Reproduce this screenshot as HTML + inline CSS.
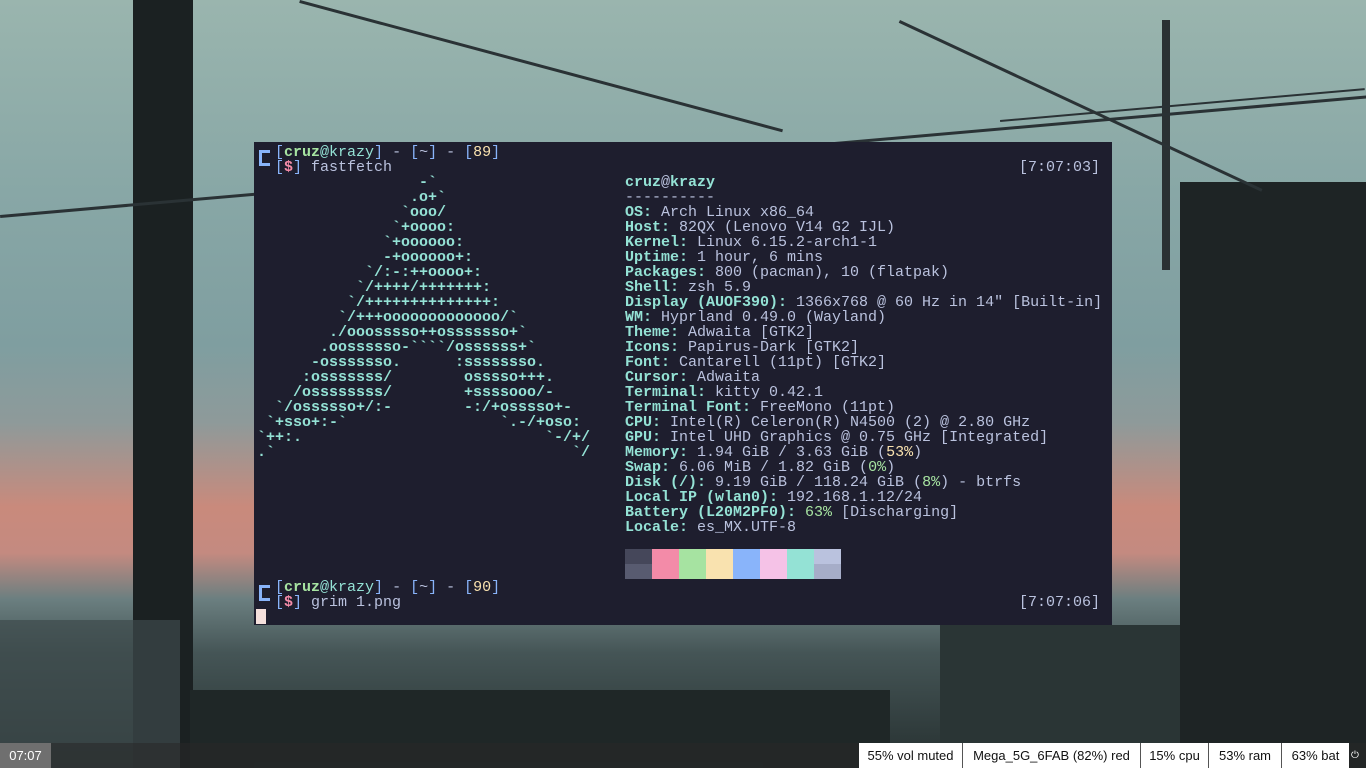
<!DOCTYPE html>
<html><head><meta charset="utf-8"><style>
*{margin:0;padding:0;box-sizing:border-box}
body{width:1366px;height:768px;overflow:hidden;position:relative;background:#86a3a3;font-family:"Liberation Mono",monospace}
.bg{position:absolute;inset:0;background:linear-gradient(180deg,#9ab5ae 0%,#88a7a6 25%,#7f9ea0 45%,#8e9a9a 55%,#c98a7c 66%,#c48a80 72%,#6b7f80 78%,#455556 85%,#263030 100%)}
.d{position:absolute;background:#1d2324}
.w{position:absolute;height:3px;background:#2a3235;transform-origin:0 0}
#term{position:absolute;left:254px;top:142px;width:858px;height:483px;background:#1e1e2e;color:#bac2de;font-size:15px;line-height:15px}
.l{position:absolute;white-space:pre;left:0}
.t{color:#94e2d5;font-weight:bold}
.g{color:#a6e3a1;font-weight:bold}
.gn{color:#a6e3a1}
.b{color:#89b4fa}
.y{color:#f9e2af}
.p{color:#f38ba8;font-weight:bold}
.lg{color:#94e2d5;font-weight:bold}
.br{position:absolute;left:5px;width:11px;height:16px;border:3px solid #89b4fa;border-right:none}
#bar{position:absolute;left:0;top:743px;width:1366px;height:25px;background:rgba(40,40,40,.55);font-family:"Liberation Sans",sans-serif;font-size:13px}
#clk{position:absolute;left:0;top:0;width:51px;height:25px;background:#6f6f6f;color:#fff;line-height:25px;text-align:center}
#mods{position:absolute;left:859px;top:0;height:25px;width:490px;display:flex;background:#fff;white-space:nowrap}
#mods div{line-height:25px;color:#111;border-right:1px solid #555;white-space:nowrap;text-align:center;overflow:hidden}
</style></head><body>
<div class="bg"></div>
<div class="d" style="left:133px;top:0;width:60px;height:768px;background:#1b2122"></div>
<div class="d" style="left:0;top:620px;width:180px;height:148px;background:#3d4a4b;opacity:.7"></div>
<div class="d" style="left:190px;top:690px;width:700px;height:78px;background:#1f2727"></div>
<div class="d" style="left:1180px;top:182px;width:186px;height:586px;background:#1e2425"></div>
<div class="d" style="left:1162px;top:20px;width:8px;height:250px;background:#2a3133"></div>
<div class="d" style="left:940px;top:625px;width:240px;height:143px;background:#2a3535"></div>
<div class="w" style="left:0;top:215px;width:1400px;transform:rotate(-5deg)"></div>
<div class="w" style="left:900px;top:20px;width:400px;transform:rotate(25deg)"></div>
<div class="w" style="left:300px;top:0;width:500px;transform:rotate(15deg)"></div>
<div class="w" style="left:1000px;top:120px;width:366px;transform:rotate(-5deg);height:2px"></div>
<div id="term">
<div class="br" style="top:8px"></div>
<div class="l" style="top:3px;left:21px"><span class="b">[</span><span class="g">cruz</span><span class="t" style="font-weight:normal">@krazy</span><span class="b">]</span> - <span class="b">[</span>~<span class="b">]</span> - <span class="b">[</span><span class="y">89</span><span class="b">]</span></div>
<div class="l" style="top:18px;left:21px"><span class="b">[</span><span class="p">$</span><span class="b">]</span> fastfetch</div>
<div class="l" style="top:18px;left:765px">[7:07:03]</div>
<div class="l lg" style="top:33px;left:3px">                  -&#96;
                 .o+&#96;
                &#96;ooo/
               &#96;+oooo:
              &#96;+oooooo:
              -+oooooo+:
            &#96;/:-:++oooo+:
           &#96;/++++/+++++++:
          &#96;/++++++++++++++:
         &#96;/+++ooooooooooooo/&#96;
        ./ooosssso++osssssso+&#96;
       .oossssso-&#96;&#96;&#96;&#96;/ossssss+&#96;
      -osssssso.      :ssssssso.
     :osssssss/        osssso+++.
    /ossssssss/        +ssssooo/-
  &#96;/ossssso+/:-        -:/+osssso+-
 &#96;+sso+:-&#96;                 &#96;.-/+oso:
&#96;++:.                           &#96;-/+/
.&#96;                                 &#96;/</div>
<div class="l" style="top:33px;left:371px"><span class="t">cruz</span>@<span class="t">krazy</span>
----------
<span class="t">OS:</span> Arch Linux x86_64
<span class="t">Host:</span> 82QX (Lenovo V14 G2 IJL)
<span class="t">Kernel:</span> Linux 6.15.2-arch1-1
<span class="t">Uptime:</span> 1 hour, 6 mins
<span class="t">Packages:</span> 800 (pacman), 10 (flatpak)
<span class="t">Shell:</span> zsh 5.9
<span class="t">Display (AUOF390):</span> 1366x768 @ 60 Hz in 14" [Built-in]
<span class="t">WM:</span> Hyprland 0.49.0 (Wayland)
<span class="t">Theme:</span> Adwaita [GTK2]
<span class="t">Icons:</span> Papirus-Dark [GTK2]
<span class="t">Font:</span> Cantarell (11pt) [GTK2]
<span class="t">Cursor:</span> Adwaita
<span class="t">Terminal:</span> kitty 0.42.1
<span class="t">Terminal Font:</span> FreeMono (11pt)
<span class="t">CPU:</span> Intel(R) Celeron(R) N4500 (2) @ 2.80 GHz
<span class="t">GPU:</span> Intel UHD Graphics @ 0.75 GHz [Integrated]
<span class="t">Memory:</span> 1.94 GiB / 3.63 GiB (<span class="y">53%</span>)
<span class="t">Swap:</span> 6.06 MiB / 1.82 GiB (<span class="gn">0%</span>)
<span class="t">Disk (/):</span> 9.19 GiB / 118.24 GiB (<span class="gn">8%</span>) - btrfs
<span class="t">Local IP (wlan0):</span> 192.168.1.12/24
<span class="t">Battery (L20M2PF0):</span> <span class="gn">63%</span> [Discharging]
<span class="t">Locale:</span> es_MX.UTF-8</div>
<div style="position:absolute;left:371px;top:407px;display:flex">
<div style="width:27px"><div style="height:15px;background:#45475a"></div><div style="height:15px;background:#585b70"></div></div>
<div style="width:27px;height:30px;background:#f38ba8"></div>
<div style="width:27px;height:30px;background:#a6e3a1"></div>
<div style="width:27px;height:30px;background:#f9e2af"></div>
<div style="width:27px;height:30px;background:#89b4fa"></div>
<div style="width:27px;height:30px;background:#f5c2e7"></div>
<div style="width:27px;height:30px;background:#94e2d5"></div>
<div style="width:27px"><div style="height:15px;background:#bac2de"></div><div style="height:15px;background:#a6adc8"></div></div>
</div>
<div class="br" style="top:443px"></div>
<div class="l" style="top:438px;left:21px"><span class="b">[</span><span class="g">cruz</span><span class="t" style="font-weight:normal">@krazy</span><span class="b">]</span> - <span class="b">[</span>~<span class="b">]</span> - <span class="b">[</span><span class="y">90</span><span class="b">]</span></div>
<div class="l" style="top:453px;left:21px"><span class="b">[</span><span class="p">$</span><span class="b">]</span> grim 1.png</div>
<div class="l" style="top:453px;left:765px">[7:07:06]</div>
<div style="position:absolute;left:2px;top:467px;width:10px;height:15px;background:#f5e0dc"></div>
</div>
<div id="bar">
<div id="clk">07:07</div>
<div id="mods"><div style="width:104px">55% vol muted</div><div style="width:178px">Mega_5G_6FAB (82%) red</div><div style="width:68px">15% cpu</div><div style="width:73px">53% ram</div><div style="width:67px;border-right:none">63% bat</div></div>
<div style="position:absolute;left:1351px;top:0;color:#fff;font-size:10px;line-height:25px">⏻</div>
</div>
</body></html>
